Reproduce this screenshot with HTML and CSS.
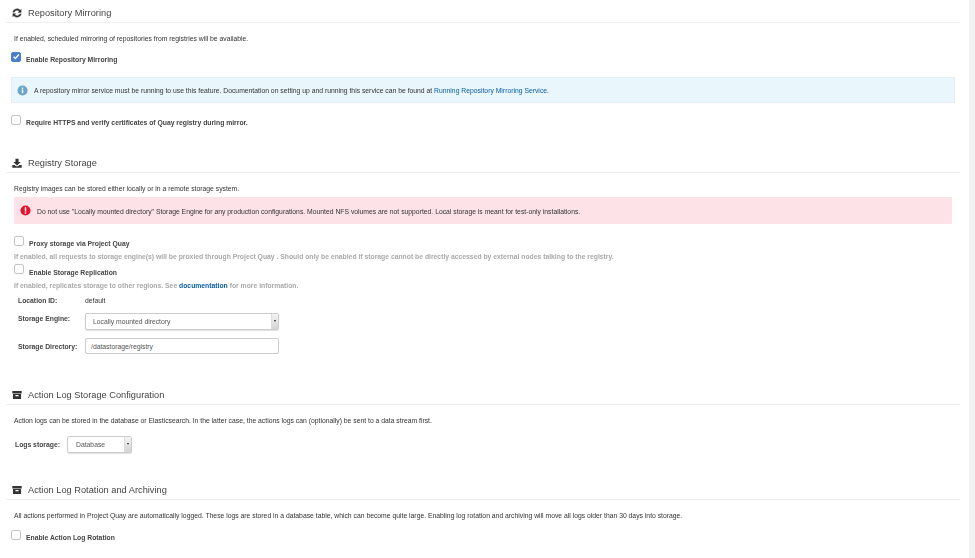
FILE: index.html
```html
<!DOCTYPE html>
<html lang="en">
<head>
<meta charset="utf-8">
<title>Quay Config</title>
<link rel="stylesheet" href="styles.css">
</head>
<body>
<div class="page">
<main class="content">
  <section class="section sec-mirror">
    <h2 class="title">
      <svg class="ico ico-bold" viewBox="0 0 16 16"><path d="M14.6 2.2V7H9.8L11.6 5.2A4.6 4.6 0 0 0 3.7 6.6H1.2A7 7 0 0 1 13.2 3.6ZM1.4 13.8V9H6.2L4.4 10.8A4.6 4.6 0 0 0 12.3 9.4H14.8A7 7 0 0 1 2.8 12.4Z"/></svg>
      <span>Repository Mirroring</span>
    </h2>
    <p class="desc">If enabled, scheduled mirroring of repositories from registries will be available.</p>
    <label class="check">
      <span class="box on"><svg viewBox="0 0 10 10"><path d="M2 4.6 4.2 6.8 8.6 1.8" fill="none" stroke="#fff" stroke-width="1.7"/></svg></span>
      <b>Enable Repository Mirroring</b>
    </label>
    <div class="alert info">
      <svg class="alert-ico" viewBox="0 0 12 12"><circle cx="6" cy="6" r="5.5" fill="#6ba5c7"/><rect x="5.2" y="5" width="1.6" height="4" fill="#fff"/><rect x="5.2" y="2.8" width="1.6" height="1.5" fill="#fff"/></svg>
      <span class="alert-text">A repository mirror service must be running to use this feature. Documentation on setting up and running this service can be found at <a href="#">Running Repository Mirroring Service</a>.</span>
    </div>
    <label class="check check-https">
      <span class="box"></span>
      <b>Require HTTPS and verify certificates of Quay registry during mirror.</b>
    </label>
  </section>

  <section class="section sec-storage">
    <h2 class="title">
      <svg class="ico" viewBox="0 0 16 16"><path d="M5.5 1H10.5V6.5H14L8 12 2 6.5H5.5ZM0.5 11H4L6.5 13.3H9.5L12 11H15.5V15.5H0.5Z"/></svg>
      <span>Registry Storage</span>
    </h2>
    <p class="desc">Registry images can be stored either locally or in a remote storage system.</p>
    <div class="alert danger">
      <svg class="alert-ico" viewBox="0 0 12 12"><circle cx="6" cy="6" r="5.5" fill="#e8112d"/><rect x="5.2" y="2.4" width="1.6" height="4.8" fill="#fff"/><rect x="5.2" y="8" width="1.6" height="1.6" fill="#fff"/></svg>
      <span class="alert-text">Do not use "Locally mounted directory" Storage Engine for any production configurations. Mounted NFS volumes are not supported. Local storage is meant for test-only installations.</span>
    </div>
    <div class="options">
      <label class="check">
        <span class="box"></span>
        <b>Proxy storage via Project Quay</b>
      </label>
      <p class="help">If enabled, all requests to storage engine(s) will be proxied through Project Quay . Should only be enabled if storage cannot be directly accessed by external nodes talking to the registry.</p>
      <label class="check check-next">
        <span class="box"></span>
        <b>Enable Storage Replication</b>
      </label>
      <p class="help">If enabled, replicates storage to other regions. See <a href="#">documentation</a> for more information.</p>
    </div>
    <div class="fields">
      <div class="field field-id"><b class="field-label">Location ID:</b><span>default</span></div>
      <div class="field field-engine"><b class="field-label">Storage Engine:</b><span class="select wide">Locally mounted directory<i class="arrow"></i></span></div>
      <div class="field field-dir"><b class="field-label">Storage Directory:</b><span class="input">/datastorage/registry</span></div>
    </div>
  </section>

  <section class="section sec-log">
    <h2 class="title">
      <svg class="ico" viewBox="0 0 16 16"><path d="M0.5 1.5H15.5V5.5H0.5ZM1.5 6.5H14.5V14.5H1.5ZM5.5 8V9.8H10.5V8Z" fill-rule="evenodd"/></svg>
      <span>Action Log Storage Configuration</span>
    </h2>
    <p class="desc">Action logs can be stored in the database or Elasticsearch. In the latter case, the actions logs can (optionally) be sent to a data stream first.</p>
    <div class="logs-row"><b>Logs storage:</b><span class="select narrow">Database<i class="arrow"></i></span></div>
  </section>

  <section class="section sec-rotate">
    <h2 class="title">
      <svg class="ico" viewBox="0 0 16 16"><path d="M0.5 1.5H15.5V5.5H0.5ZM1.5 6.5H14.5V14.5H1.5ZM5.5 8V9.8H10.5V8Z" fill-rule="evenodd"/></svg>
      <span>Action Log Rotation and Archiving</span>
    </h2>
    <p class="desc">All actions performed in Project Quay are automatically logged. These logs are stored in a database table, which can become quite large. Enabling log rotation and archiving will move all logs older than 30 days into storage.</p>
    <label class="check">
      <span class="box"></span>
      <b>Enable Action Log Rotation</b>
    </label>
  </section>
</main>
<div class="scrollbar"></div>
</div>
</body>
</html>
```
FILE: styles.css
```css
* { box-sizing: border-box; }
html, body { margin: 0; height: 100%; overflow: hidden; background: #fff; }
body { font-family: "Liberation Sans", Arial, sans-serif; font-size: 6.8px; line-height: 10px; color: #333; }
.page { display: flex; height: 558px; }
.content { flex: 1; padding: 0 9px 0 6px; min-width: 0; filter: blur(0.35px); }
.scrollbar { width: 6px; background: #f1f1f1; }
.section { display: flow-root; }
.title { display: flex; align-items: center; gap: 6px; height: 23px; margin: 0; padding: 8px 0 4px 6px; border-bottom: 1px solid #eee; font-size: 9.25px; font-weight: 400; color: #444; }
.ico { width: 10px; height: 10px; fill: #333; flex: none; }
.ico-bold { stroke: #333; stroke-width: .7; }
.desc { margin: 11px 0 0 8px; }
.check { display: flex; align-items: flex-start; }
.check b { font-weight: 700; color: #444; margin-top: 3px; }
.box { flex: none; width: 10px; height: 10px; margin-right: 5px; border: 1px solid #c4c4c4; border-radius: 2px; background: #fff; }
.box.on { background: #4a7fcb; border-color: #4a7fcb; padding: 0; }
.box.on svg { display: block; width: 8px; height: 8px; }
.sec-mirror .check { margin: 8px 0 0 5px; }
.sec-mirror .check-https { margin-top: 12px; }
.alert { display: flex; align-items: center; color: #333; border: 1px solid #e3eff5; }
.alert-ico { flex: none; width: 11px; height: 11px; }
.alert-text { padding-top: 2px; }
.alert a { color: #0b5fa5; text-decoration: none; }
.info { height: 26px; margin: 12px 5px 0 5px; padding-left: 5px; gap: 6px; background: #e9f6fc; }
.danger { height: 27px; margin: 3px 8px 0 8px; padding-left: 5px; gap: 6px; background: #fde3e7; border-color: #fbe5e8; }
.sec-storage { margin-top: 22px; }
.options { margin: 12px 0 0 8px; }
.help { margin: 3px 0 0; font-weight: 700; color: #a9a9a9; }
.help a { color: #0b5fa5; text-decoration: none; }
.check-next { margin-top: 3px; }
.check-next .box { margin-top: -1px; }
.fields { margin: 5px 0 0 12px; }
.field { display: grid; grid-template-columns: 67px auto; justify-items: start; }
.field-label { color: #444; }
.field-engine { margin-top: 7px; }
.field-engine .field-label { margin-top: 1px; }
.field-dir { margin-top: 8px; align-items: center; }
.field-dir .field-label { margin-top: 1px; }
.select, .input { display: block; position: relative; height: 17px; line-height: 16px; border: 1px solid #ccc; border-radius: 2px; background: #fff; color: #555; }
.select { box-shadow: 0 1px 1px rgba(0,0,0,.12); }
.select.wide { width: 194px; padding-left: 7px; }
.select.narrow { width: 65px; padding-left: 8px; }
.input { width: 194px; height: 16px; padding-left: 5px; }
.arrow { position: absolute; top: 0; right: 0; bottom: 0; width: 7px; background: linear-gradient(#f4f4f4, #d4d4d4); border-left: 1px solid #ddd; }
.arrow::after { content: ""; position: absolute; left: 2px; top: 6px; border: 1.5px solid transparent; border-top: 2px solid #222; border-bottom: 0; }
.sec-log { margin-top: 28px; }
.logs-row { display: flex; align-items: center; margin: 10px 0 0 9px; }
.logs-row b { width: 52px; flex: none; color: #444; }
.sec-rotate { margin-top: 24px; }
.sec-rotate .check { margin: 9px 0 0 5px; }
```
